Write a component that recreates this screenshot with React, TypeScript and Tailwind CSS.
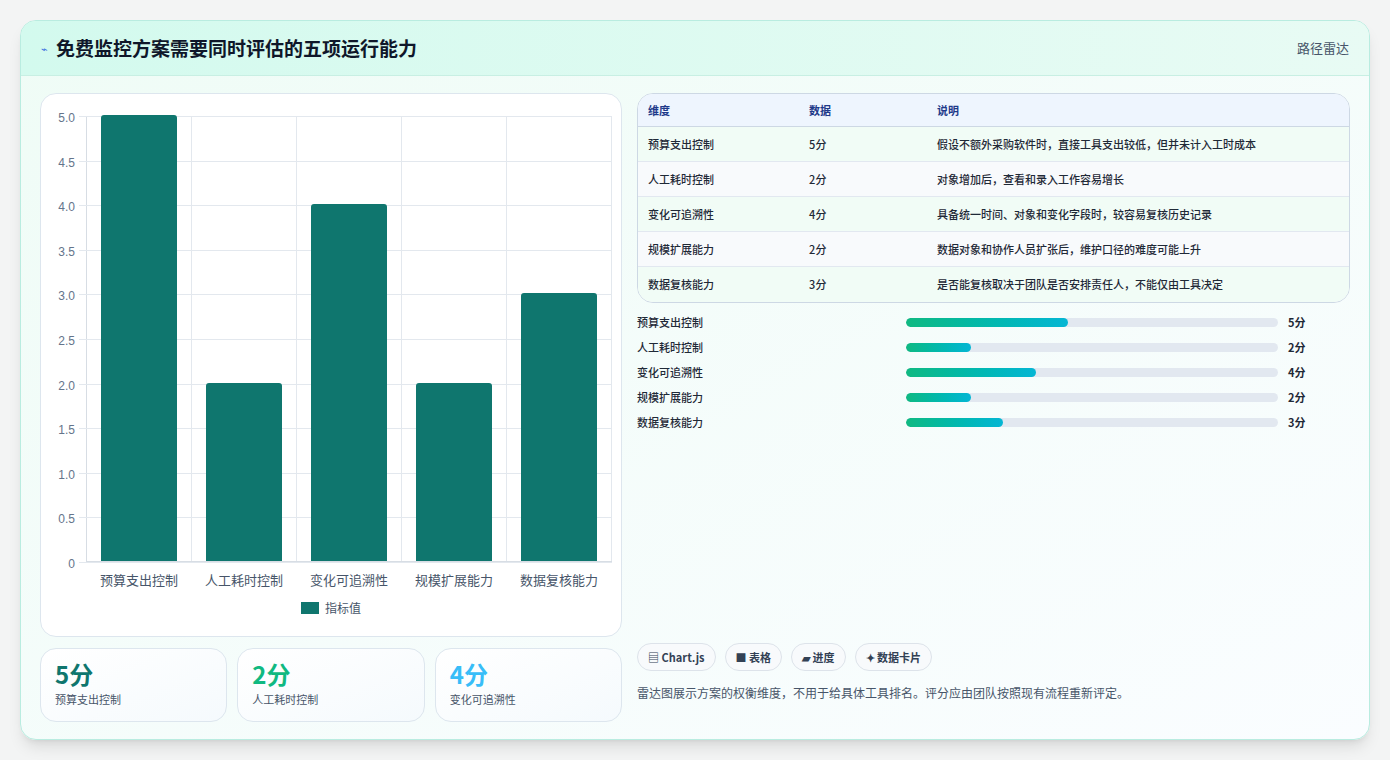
export default function App() {
  const rows = [
    { name: "预算支出控制", v: 5, note: "假设不额外采购软件时，直接工具支出较低，但并未计入工时成本" },
    { name: "人工耗时控制", v: 2, note: "对象增加后，查看和录入工作容易增长" },
    { name: "变化可追溯性", v: 4, note: "具备统一时间、对象和变化字段时，较容易复核历史记录" },
    { name: "规模扩展能力", v: 2, note: "数据对象和协作人员扩张后，维护口径的难度可能上升" },
    { name: "数据复核能力", v: 3, note: "是否能复核取决于团队是否安排责任人，不能仅由工具决定" },
  ]
  const ticks = ["5.0", "4.5", "4.0", "3.5", "3.0", "2.5", "2.0", "1.5", "1.0", "0.5", "0"]
  const font = { fontFamily: '"Noto Sans CJK SC", "Noto Sans", sans-serif' }
  return (
    <div className="w-[1390px] h-[760px] bg-[#f3f4f4] p-[20px]" style={font}>
      <div className="h-[720px] w-[1350px] rounded-2xl border border-[#b9ece0] bg-gradient-to-br from-[#effcf6] to-[#fafdff] shadow-lg overflow-hidden flex flex-col">
        <div className="h-[55px] flex items-center justify-between px-[20px] bg-gradient-to-r from-[#d3faee] to-[#e8fbf4] border-b border-[#c8efe3]">
          <div className="flex items-center gap-2">
            <span className="text-[11px] text-[#3b6fe0]">⌁</span>
            <span className="text-[19px] font-bold text-[#0f172a]">免费监控方案需要同时评估的五项运行能力</span>
          </div>
          <span className="text-[13px] text-[#475569]">路径雷达</span>
        </div>
        <div className="flex gap-[15px] px-[19px] pt-[17px]">
          <div className="w-[583px] flex flex-col gap-[11px]">
            <div className="h-[544px] rounded-2xl border border-[#dde6ee] bg-white relative">
              <div className="absolute left-[45px] top-[22px] w-[526px] h-[446px] border-l border-b border-[#d7dde4]">
                {ticks.map((t, i) => (
                  <div key={t} className="absolute left-[-8px] right-0 border-t border-[#e3e8ee]" style={{ top: i * 44.6 }}>
                    <span className="absolute right-full mr-[4px] -top-[8px] text-[12px] text-[#64748b]" style={{ fontFamily: '"Liberation Sans", sans-serif' }}>{t}</span>
                  </div>
                ))}
                <div className="absolute inset-0 flex">
                  {rows.map((r) => (
                    <div key={r.name} className="flex-1 border-r border-[#e3e8ee] flex items-end justify-center relative">
                      <div className="w-[76px] bg-[#0f766e] rounded-t-[3px]" style={{ height: r.v * 89.2 }} />
                      <span className="absolute top-full mt-[9px] text-[13px] text-[#475569] whitespace-nowrap">{r.name}</span>
                    </div>
                  ))}
                </div>
              </div>
              <div className="absolute top-[505px] left-0 right-0 flex justify-center items-center gap-[6px]">
                <span className="w-[18px] h-[12px] bg-[#0f766e]" />
                <span className="text-[12px] text-[#475569]">指标值</span>
              </div>
            </div>
            <div className="grid grid-cols-3 gap-[10px]">
              {[["5分", "预算支出控制", "text-[#0f766e]"], ["2分", "人工耗时控制", "text-[#10b981]"], ["4分", "变化可追溯性", "text-[#38bdf8]"]].map(([a, b, c]) => (
                <div key={b} className="h-[74px] rounded-2xl border border-[#dde6ee] bg-gradient-to-br from-white to-[#f5fafd] px-[14px] pt-[10px]">
                  <div className={`text-[24px] font-bold leading-[30px] ${c}`}>{a}</div>
                  <div className="text-[11px] text-[#475569] mt-[2px]">{b}</div>
                </div>
              ))}
            </div>
          </div>
          <div className="w-[714px] flex flex-col">
            <div className="rounded-2xl border border-[#cdd8e4] overflow-hidden bg-white">
              <div className="flex h-[33px] items-center bg-[#eef5fe] border-b border-[#cdd8e4] text-[11px] font-bold text-[#1e3a8a]">
                <span className="w-[171px] pl-[10px]">维度</span>
                <span className="w-[128px]">数据</span>
                <span>说明</span>
              </div>
              {rows.map((r, i) => (
                <div key={r.name} className={`flex h-[35px] items-center text-[11px] font-medium text-[#1f2937] ${i % 2 ? "bg-[#f8fafc]" : "bg-[#f1fcf6]"} ${i < 4 ? "border-b border-[#e2e8f0]" : ""}`}>
                  <span className="w-[171px] pl-[10px]">{r.name}</span>
                  <span className="w-[128px]">{r.v}分</span>
                  <span>{r.note}</span>
                </div>
              ))}
            </div>
            <div className="flex flex-col gap-[9px] mt-[11px]">
              {rows.map((r) => (
                <div key={r.name} className="flex items-center h-[16px] text-[11px]">
                  <span className="w-[269px] text-[#1f2937] font-medium">{r.name}</span>
                  <div className="w-[372px] h-[9px] rounded-full bg-[#e2e8f0] overflow-hidden">
                    <div className="h-full rounded-full bg-gradient-to-r from-[#10b981] to-[#06b6d4]" style={{ width: `${r.v * 8.7}%` }} />
                  </div>
                  <span className="ml-[10px] font-bold text-[#1f2937]">{r.v}分</span>
                </div>
              ))}
            </div>
            <div className="mt-auto flex gap-[9px] text-[11px] font-bold text-[#334155]">
              {["▤ Chart.js", "■ 表格", "▰ 进度", "✦ 数据卡片"].map((c) => (
                <span key={c} className="h-[28px] px-[10px] rounded-full border border-[#dde3ea] bg-[#f8fafc] flex items-center">{c}</span>
              ))}
            </div>
            <div className="mt-[13px] mb-[20px] text-[12px] text-[#475569]">雷达图展示方案的权衡维度，不用于给具体工具排名。评分应由团队按照现有流程重新评定。</div>
          </div>
        </div>
      </div>
    </div>
  )
}
